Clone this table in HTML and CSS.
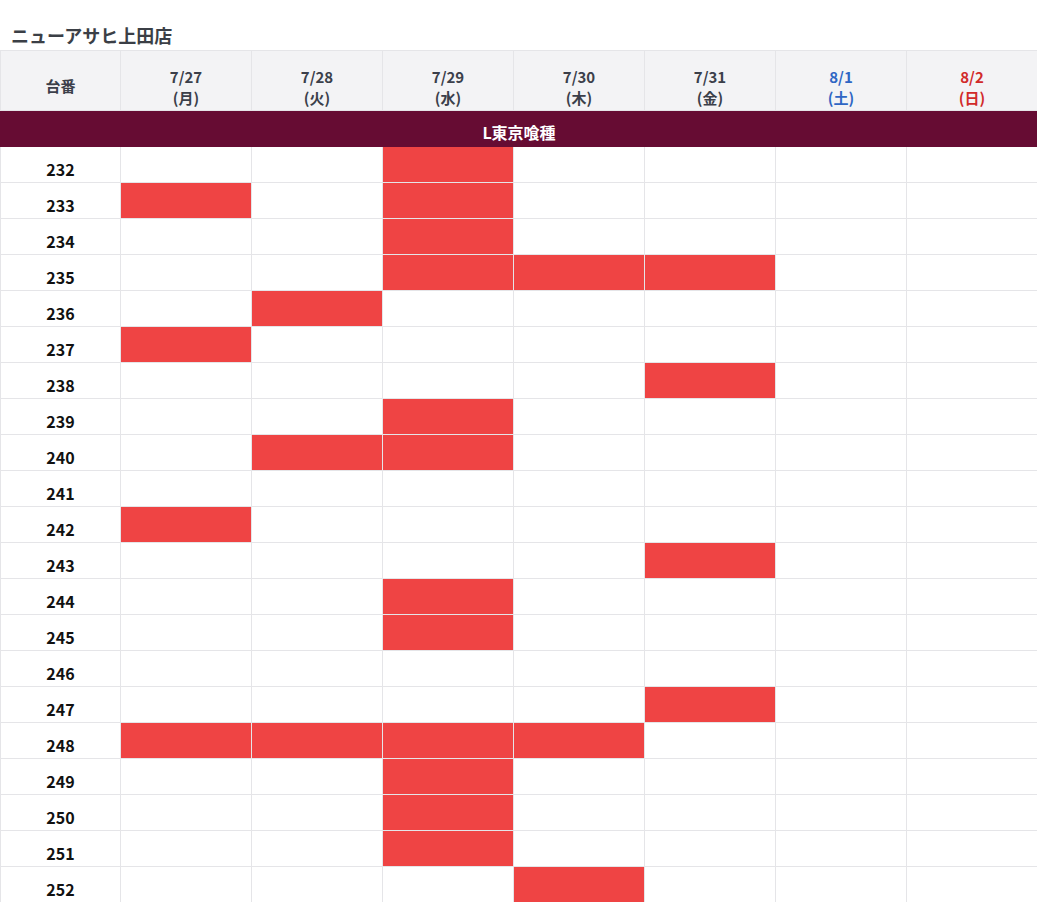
FILE: index.html
```html
<!DOCTYPE html>
<html lang="ja">
<head>
<meta charset="utf-8">
<title>ニューアサヒ上田店</title>
<link rel="stylesheet" href="styles.css">
</head>
<body>
<h1 class="title">ニューアサヒ上田店</h1>
<table class="grid">
<colgroup><col class="c-num"><col><col><col><col><col><col><col></colgroup>
<thead>
<tr>
<th class="head-num">台番</th>
<th>7/27<br>(月)</th>
<th>7/28<br>(火)</th>
<th>7/29<br>(水)</th>
<th>7/30<br>(木)</th>
<th>7/31<br>(金)</th>
<th class="sat">8/1<br>(土)</th>
<th class="sun">8/2<br>(日)</th>
</tr>
</thead>
<tbody>
<tr class="band"><td colspan="8">L東京喰種</td></tr>
<tr><th>232</th><td></td><td></td><td class="hit"></td><td></td><td></td><td></td><td></td></tr>
<tr><th>233</th><td class="hit"></td><td></td><td class="hit"></td><td></td><td></td><td></td><td></td></tr>
<tr><th>234</th><td></td><td></td><td class="hit"></td><td></td><td></td><td></td><td></td></tr>
<tr><th>235</th><td></td><td></td><td class="hit"></td><td class="hit"></td><td class="hit"></td><td></td><td></td></tr>
<tr><th>236</th><td></td><td class="hit"></td><td></td><td></td><td></td><td></td><td></td></tr>
<tr><th>237</th><td class="hit"></td><td></td><td></td><td></td><td></td><td></td><td></td></tr>
<tr><th>238</th><td></td><td></td><td></td><td></td><td class="hit"></td><td></td><td></td></tr>
<tr><th>239</th><td></td><td></td><td class="hit"></td><td></td><td></td><td></td><td></td></tr>
<tr><th>240</th><td></td><td class="hit"></td><td class="hit"></td><td></td><td></td><td></td><td></td></tr>
<tr><th>241</th><td></td><td></td><td></td><td></td><td></td><td></td><td></td></tr>
<tr><th>242</th><td class="hit"></td><td></td><td></td><td></td><td></td><td></td><td></td></tr>
<tr><th>243</th><td></td><td></td><td></td><td></td><td class="hit"></td><td></td><td></td></tr>
<tr><th>244</th><td></td><td></td><td class="hit"></td><td></td><td></td><td></td><td></td></tr>
<tr><th>245</th><td></td><td></td><td class="hit"></td><td></td><td></td><td></td><td></td></tr>
<tr><th>246</th><td></td><td></td><td></td><td></td><td></td><td></td><td></td></tr>
<tr><th>247</th><td></td><td></td><td></td><td></td><td class="hit"></td><td></td><td></td></tr>
<tr><th>248</th><td class="hit"></td><td class="hit"></td><td class="hit"></td><td class="hit"></td><td></td><td></td><td></td></tr>
<tr><th>249</th><td></td><td></td><td class="hit"></td><td></td><td></td><td></td><td></td></tr>
<tr><th>250</th><td></td><td></td><td class="hit"></td><td></td><td></td><td></td><td></td></tr>
<tr><th>251</th><td></td><td></td><td class="hit"></td><td></td><td></td><td></td><td></td></tr>
<tr><th>252</th><td></td><td></td><td></td><td class="hit"></td><td></td><td></td><td></td></tr>
</tbody>
</table>
</body>
</html>
```
FILE: styles.css
```css
html, body {
  margin: 0;
  padding: 0;
  background: #ffffff;
  font-family: "Noto Sans CJK JP", "Noto Sans", sans-serif;
}

.title {
  margin: 0;
  padding: 24px 0 0 11px;
  height: 26px;
  font-size: 18px;
  line-height: 22px;
  font-weight: 700;
  color: #3b3f46;
}

.grid {
  width: 1037px;
  table-layout: fixed;
  border-collapse: collapse;
}

.grid col { width: 131px; }
.grid col.c-num { width: 120px; }

.grid th,
.grid td {
  border: 1px solid #e5e5e8;
  padding: 0;
}

.grid thead th {
  height: 60px;
  box-sizing: border-box;
  background: #f3f3f5;
  color: #3b3f4a;
  font-size: 15px;
  line-height: 21px;
  font-weight: 700;
  text-align: center;
  vertical-align: middle;
  padding-top: 13px;
}

.grid thead th.head-num { padding-top: 9px; }
.grid thead th.sat { color: #2f66c4; }
.grid thead th.sun { color: #d12a2a; }

.band td {
  height: 36px;
  background: #660c33;
  border-color: #660c33;
  color: #ffffff;
  font-size: 16px;
  font-weight: 700;
  text-align: center;
  line-height: 20px;
  padding-top: 7px;
  box-sizing: border-box;
}

.grid tbody th {
  height: 36px;
  box-sizing: border-box;
  padding-top: 8px;
  font-size: 16px;
  line-height: 20px;
  font-weight: 700;
  color: #111111;
  text-align: center;
}

.grid tbody td.hit {
  background: #ef4444;
}
```
